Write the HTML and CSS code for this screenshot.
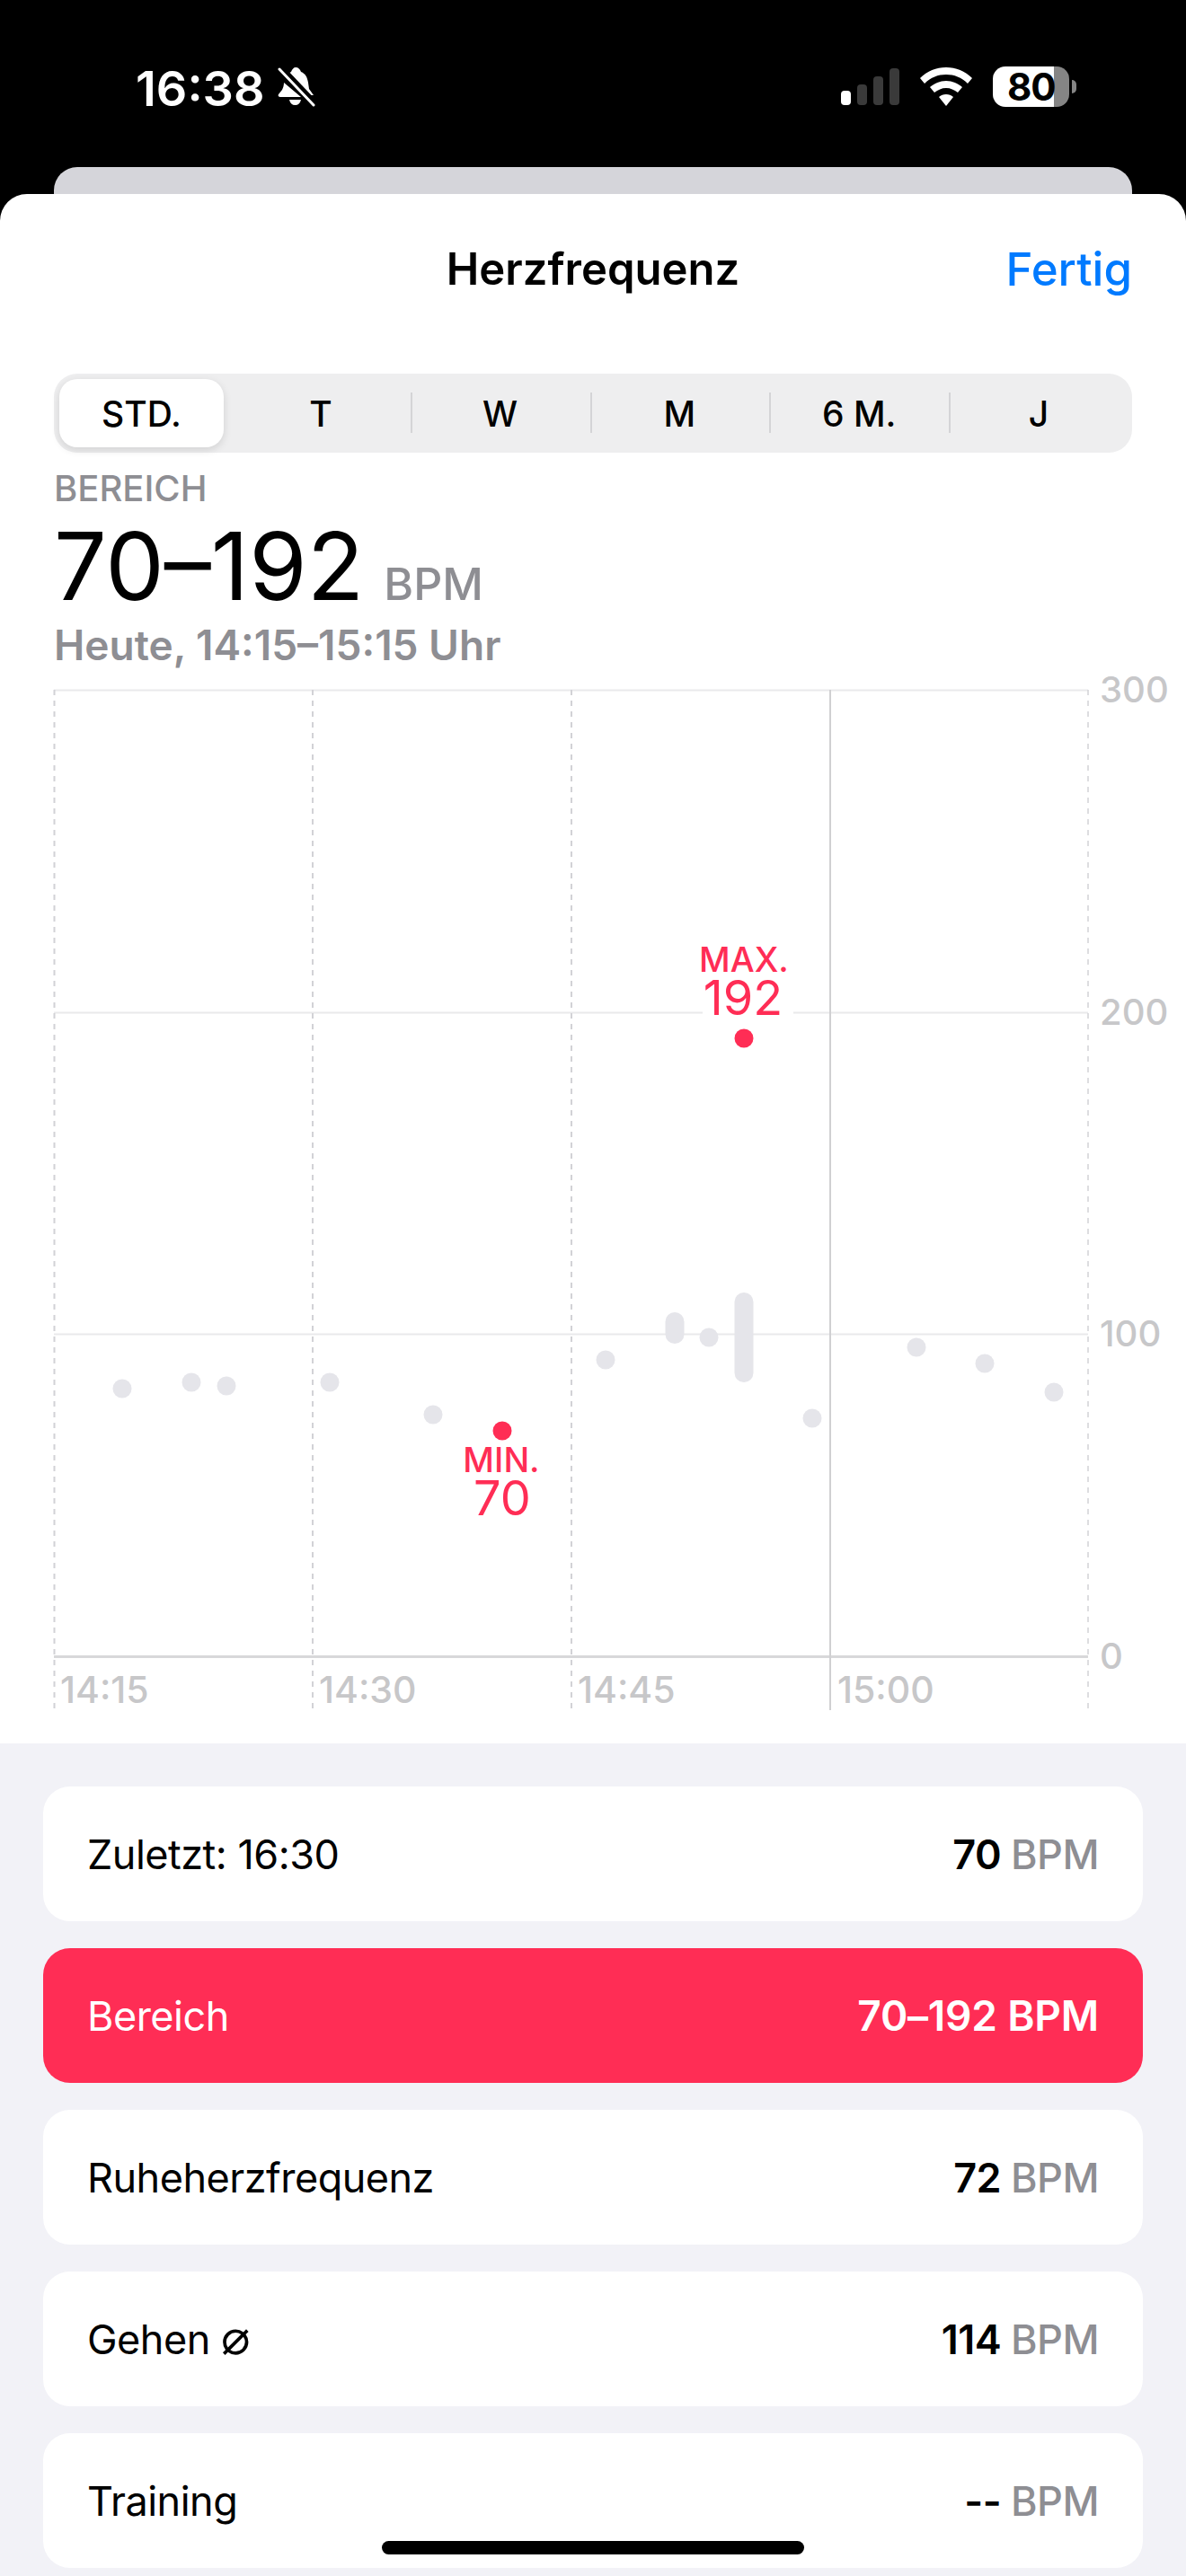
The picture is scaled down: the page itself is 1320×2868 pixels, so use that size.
FILE: index.html
```html
<!DOCTYPE html>
<html lang="de">
<head>
    <meta charset="utf-8">
    <title>Herzfrequenz</title>
    <link rel="stylesheet" href="styles.css">
</head>
<body>
<div class="phone">
    <div class="statusbar">
        <div class="status-left">
            <span class="clock">16:38</span>
            <svg class="bell" width="42" height="46" viewBox="0 0 42 46">
                <path fill="#fff" d="M20 1c3 0 5 2 6 5 5 2 7 6 8 12l1 7 5 7L29 32 9 12C9 10 13 7 15 6c1-3 3-5 5-5zM7 18l19 16H3c-2 0-3-2-2-3l4-5c1-2 2-5 2-8zM13 37h13c-1 4-3 6-6.500 6S14 41 13 37z"/>
                <path stroke="#000" stroke-width="6" d="M2 -1L42 41"/>
                <path stroke="#fff" stroke-width="3" stroke-linecap="round" d="M2 3L40 43"/>
            </svg>
        </div>
        <div class="status-right">
            <div class="signal">
                <i class="bar bar-on bar-1"></i>
                <i class="bar bar-2"></i>
                <i class="bar bar-3"></i>
                <i class="bar bar-4"></i>
            </div>
            <svg class="wifi" width="58" height="43" viewBox="0 0 58 43">
                <path fill="#fff" d="M29 0c11 0 21 4 29 12l-5 6C46 11 38 8 29 8S12 11 5 18l-5-6C8 4 18 0 29 0z"/>
                <path fill="#fff" d="M29 15c7 0 13 3 18 7l-5 6c-4-3-8-5-13-5s-9 2-13 5l-5-6c5-4 11-7 18-7z"/>
                <path fill="#fff" d="M29 30c3 0 6 1 8 3l-8 10-8-10c2-2 5-3 8-3z"/>
            </svg>
            <div class="battery">
                <div class="battery-body"><span class="battery-level">80</span></div>
                <i class="battery-nib"></i>
            </div>
        </div>
    </div>

    <div class="peek"></div>

    <div class="sheet">
        <div class="nav">
            <span class="nav-title">Herzfrequenz</span>
            <span class="nav-done">Fertig</span>
        </div>

        <div class="segments">
            <span class="segment segment-active">STD.</span>
            <span class="segment">T</span>
            <span class="segment segment-line">W</span>
            <span class="segment segment-line">M</span>
            <span class="segment segment-line">6 M.</span>
            <span class="segment segment-line segment-last">J</span>
        </div>

        <div class="summary">
            <div class="summary-label">BEREICH</div>
            <div class="summary-value">70–192 <span class="summary-unit">BPM</span></div>
            <div class="summary-date">Heute, 14:15–15:15 Uhr</div>
        </div>

        <svg class="chart" width="1320" height="1184" viewBox="0 736 1320 1184">
            <g class="grid-h">
                <path d="M60 768.500H1211"/>
                <path d="M60 1127.500H1211"/>
                <path d="M60 1485.500H1211"/>
            </g>
            <path class="grid-base" d="M60 1844.500H1211"/>
            <path class="grid-dash" d="M60.500 768V1904"/>
            <path class="grid-dash" d="M348 768V1904"/>
            <path class="grid-dash" d="M636 768V1904"/>
            <path class="grid-dash grid-thin" d="M1211 768V1904"/>
            <path class="grid-solid" d="M924 768V1904"/>

            <g class="axis">
                <text x="1224" y="782">300</text>
                <text x="1224" y="1141">200</text>
                <text x="1224" y="1499">100</text>
                <text x="1224" y="1858">0</text>
            </g>
            <g class="axis axis-time">
                <text x="67" y="1896">14:15</text>
                <text x="355" y="1896">14:30</text>
                <text x="643" y="1896">14:45</text>
                <text x="932" y="1896">15:00</text>
            </g>

            <g class="points">
                <circle cx="136" cy="1546" r="10.500"/>
                <circle cx="213" cy="1539" r="10.500"/>
                <circle cx="252" cy="1543" r="10.500"/>
                <circle cx="367" cy="1539" r="10.500"/>
                <circle cx="482" cy="1575" r="10.500"/>
                <circle cx="674" cy="1514" r="10.500"/>
                <rect x="740.500" y="1461" width="21" height="35" rx="10.500"/>
                <circle cx="789" cy="1489" r="10.500"/>
                <rect x="817.500" y="1439" width="21" height="100" rx="10.500"/>
                <circle cx="904" cy="1579" r="10.500"/>
                <circle cx="1020" cy="1500" r="10.500"/>
                <circle cx="1096" cy="1518" r="10.500"/>
                <circle cx="1173" cy="1550" r="10.500"/>
            </g>

            <rect class="knockout" x="782" y="1088" width="101" height="44"/>
            <g class="marker">
                <circle cx="828" cy="1156" r="10.500"/>
                <text class="marker-label" x="828" y="1082">MAX.</text>
                <text class="marker-value" x="827" y="1130">192</text>
                <circle cx="559" cy="1593" r="10.500"/>
                <text class="marker-label" x="558" y="1639">MIN.</text>
                <text class="marker-value" x="559" y="1687">70</text>
            </g>
        </svg>
    </div>

    <div class="list">
        <div class="row">
            <span>Zuletzt: 16:30</span>
            <span class="row-value">70 <span class="row-unit">BPM</span></span>
        </div>
        <div class="row row-active">
            <span>Bereich</span>
            <span class="row-value">70–192 <span class="row-unit">BPM</span></span>
        </div>
        <div class="row">
            <span>Ruheherzfrequenz</span>
            <span class="row-value">72 <span class="row-unit">BPM</span></span>
        </div>
        <div class="row">
            <span>Gehen <span class="row-avg">⌀</span></span>
            <span class="row-value">114 <span class="row-unit">BPM</span></span>
        </div>
        <div class="row">
            <span>Training</span>
            <span class="row-value">-- <span class="row-unit">BPM</span></span>
        </div>
    </div>

    <div class="home-indicator"></div>
</div>
</body>
</html>
```

FILE: styles.css
```css
* {
  box-sizing: border-box;
}
html, body {
  margin: 0;
  background-color: #000;
}
body {
  font-family: Inter, "Liberation Sans", sans-serif;
  color: #000;
}
.phone {
  position: relative;
  width: 1320px;
  height: 2868px;
  overflow: hidden;
  background-color: #000;
}

/* status bar */
.statusbar {
  display: flex;
  justify-content: space-between;
  height: 186px;
  padding: 74px 122px 0 151px;
  color: #fff;
}
.status-left {
  display: flex;
  align-items: flex-start;
  gap: 14px;
}
.clock {
  font-size: 54px;
  font-weight: 600;
  line-height: 50px;
}
.status-right {
  display: flex;
  align-items: flex-start;
}
.signal {
  display: flex;
  align-items: flex-end;
  gap: 7px;
  height: 41px;
  margin: 2px 23px 0 0;
}
.bar {
  width: 11px;
  border-radius: 4px;
  background-color: #3a3a3a;
}
.bar-on {
  background-color: #fff;
}
.bar-1 { height: 16px; }
.bar-2 { height: 23px; }
.bar-3 { height: 32px; }
.bar-4 { height: 41px; }
.wifi {
  margin: 1px 23px 0 0;
}
.battery {
  display: flex;
  align-items: center;
}
.battery-body {
  width: 85px;
  height: 45px;
  border-radius: 14px;
  background: linear-gradient(90deg, #fff 68px, #858585 68px);
  color: #000;
  font-size: 42px;
  font-weight: 700;
  letter-spacing: -1px;
  line-height: 45px;
  padding-left: 16px;
}
.battery-nib {
  width: 5px;
  height: 15px;
  margin-left: 3px;
  border-radius: 0 5px 5px 0;
  background-color: #858585;
}

/* card behind the sheet */
.peek {
  height: 40px;
  margin: 0 60px -10px;
  border-radius: 26px 26px 0 0;
  background-color: #d5d5da;
}

.sheet {
  position: relative;
  height: 1725px;
  border-radius: 30px 30px 0 0;
  background-color: #fff;
}
.nav {
  position: relative;
  height: 200px;
  padding-top: 54px;
  text-align: center;
  line-height: 60px;
}
.nav-title {
  font-size: 49px;
  font-weight: 600;
}
.nav-done {
  position: absolute;
  right: 60px;
  top: 54px;
  color: #007aff;
  font-size: 51px;
  font-weight: 500;
}

/* time range picker */
.segments {
  display: grid;
  grid-template-columns: 197px repeat(4, 199.750px) 1fr;
  height: 88px;
  margin: 0 60px;
  border-radius: 26px;
  background-color: #eeeeef;
}
.segment {
  display: flex;
  align-items: center;
  justify-content: center;
  position: relative;
  font-size: 39px;
  font-weight: 500;
}
.segment-active {
  margin: 6px 8px 6px 6px;
  border-radius: 20px;
  background-color: #fff;
  box-shadow: 0 3px 10px rgba(0, 0, 0, 0.12);
}
.segment-last {
  padding-right: 4px;
}
.segment-line::before {
  content: "";
  position: absolute;
  left: 0;
  top: 21px;
  height: 45px;
  width: 2px;
  background-color: #d4d4d6;
}

.summary {
  height: 246px;
  padding: 16px 0 0 60px;
}
.summary-label {
  height: 48px;
  color: #8e8e93;
  font-size: 40px;
  font-weight: 500;
  line-height: 48px;
}
.summary-value {
  height: 123px;
  font-size: 104px;
  font-weight: 400;
  line-height: 124px;
}
.summary-unit {
  color: #8e8e93;
  font-size: 50px;
  font-weight: 500;
  margin-left: -7px;
}
.summary-date {
  color: #8e8e93;
  font-size: 46px;
  font-weight: 600;
  line-height: 54px;
}

/* chart */
.chart {
  display: block;
  margin-top: -14px;
}
.grid-h path {
  stroke: #e9e9eb;
  stroke-width: 2;
}
.grid-base {
  stroke: #d8d8da;
  stroke-width: 3;
}
.grid-solid {
  stroke: #d0d0d2;
  stroke-width: 2;
}
.grid-dash {
  stroke: #d2d2d6;
  stroke-width: 2;
  stroke-dasharray: 6 6;
}
.grid-thin {
  stroke-width: 1.500;
}
.axis text {
  fill: #c7c7c9;
  font-size: 40px;
  font-weight: 500;
}
.axis-time text {
  font-size: 41px;
}
.points circle, .points rect {
  fill: #e5e5ea;
}
.knockout {
  fill: #fff;
}
.marker circle {
  fill: #ff2d55;
}
.marker text {
  fill: #ff2d55;
  text-anchor: middle;
}
.marker-label {
  font-size: 38px;
  font-weight: 500;
}
.marker-value {
  font-size: 54px;
  font-weight: 400;
}

/* rows */
.list {
  display: flex;
  flex-direction: column;
  gap: 30px;
  height: 927px;
  padding: 48px 48px 0;
  background-color: #f2f2f7;
}
.row {
  display: flex;
  align-items: center;
  justify-content: space-between;
  flex: none;
  height: 150px;
  padding: 0 49px 0 49px;
  border-radius: 30px;
  background-color: #fff;
  font-size: 45px;
  letter-spacing: -0.500px;
}
.row-value {
  font-weight: 600;
}
.row-unit {
  color: #8e8e93;
  font-weight: 500;
}
.row-avg {
  font-size: 54px;
  line-height: 0;
}
.row-active {
  background-color: #ff2d55;
  color: #fff;
}
.row-active .row-value {
  font-size: 46px;
  letter-spacing: -0.200px;
}
.row-active .row-unit {
  color: #fff;
  font-weight: 600;
}

.home-indicator {
  position: absolute;
  left: 425px;
  bottom: 24px;
  width: 470px;
  height: 15px;
  border-radius: 8px;
  background-color: #000;
}
```
